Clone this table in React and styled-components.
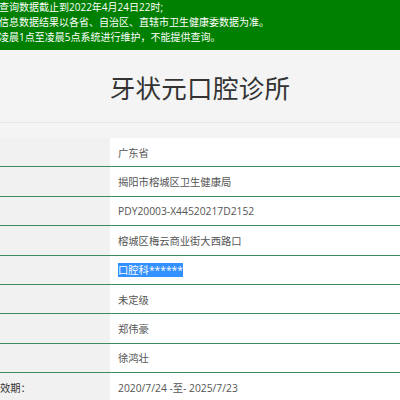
import React from "react";
import styled, { createGlobalStyle } from "styled-components";

const GlobalStyle = createGlobalStyle`
  html, body {
    margin: 0;
    padding: 0;
    background: #f4f4f4;
    overflow: hidden;
  }
  body {
    font-family: "Open Sans", "Noto Sans CJK SC", sans-serif;
  }
`;

const notices = [
  "查询数据截止到2022年4月24日22时;",
  "信息数据结果以各省、自治区、直辖市卫生健康委数据为准。",
  "凌晨1点至凌晨5点系统进行维护，不能提供查询。",
];

const rows = [
  { label: "", value: "广东省" },
  { label: "", value: "揭阳市榕城区卫生健康局" },
  { label: "", value: "PDY20003-X44520217D2152" },
  { label: "", value: "榕城区梅云商业街大西路口" },
  { label: "", value: "口腔科******", selected: true },
  { label: "", value: "未定级" },
  { label: "", value: "郑伟豪" },
  { label: "", value: "徐鸿壮" },
  { label: "效期：", value: "2020/7/24 -至- 2025/7/23" },
];

const App = () => {
  return (
    <Page>
      <GlobalStyle />
      <Notice>
        {notices.map((n) => (
          <p key={n}>{n}</p>
        ))}
      </Notice>
      <Header>
        <h1>牙状元口腔诊所</h1>
      </Header>
      <InfoTable>
        {rows.map((r, i) => (
          <Row key={i}>
            <Label>{r.label}</Label>
            <Value>{r.selected ? <Selected>{r.value}</Selected> : r.value}</Value>
          </Row>
        ))}
      </InfoTable>
    </Page>
  );
};

const Page = styled.div`
  width: 400px;
  height: 400px;
  overflow: hidden;
`;

const Notice = styled.div`
  height: 50px;
  box-sizing: border-box;
  background: #008000;
  color: #fff;
  font-size: 10px;
  line-height: 15px;
  padding-top: 0;

  p {
    margin: 0 0 0 -1px;
    white-space: nowrap;
  }
`;

const Header = styled.div`
  height: 72px;
  display: flex;
  align-items: center;
  justify-content: center;
  border-bottom: 1px solid #e6e6e6;

  h1 {
    margin: 0;
    font-family: "Noto Sans CJK SC", sans-serif;
    font-size: 25.5px;
    font-weight: 400;
    color: #333;
    letter-spacing: 0.3px;
  }
`;

const InfoTable = styled.div`
  margin-top: 15px;
  display: flex;
  flex-direction: column;
`;

const Row = styled.div`
  display: grid;
  grid-template-columns: 110px 1fr;
  height: 29.4px;
  box-sizing: border-box;
  border-bottom: 1px solid #3b8b5e;
  box-shadow: 0 -1px 0 #a9d4ba inset;
  font-size: 10.3px;
`;

const Label = styled.div`
  background: #f1f1f1;
  color: #333;
  display: flex;
  align-items: center;
  padding-left: 0;
  white-space: nowrap;
`;

const Value = styled.div`
  background: #fff;
  color: #555;
  display: flex;
  align-items: center;
  padding-left: 8px;
  white-space: nowrap;
`;

const Selected = styled.span`
  background: #3390ff;
  color: #fff;
  line-height: 14px;
`;

export default App;
